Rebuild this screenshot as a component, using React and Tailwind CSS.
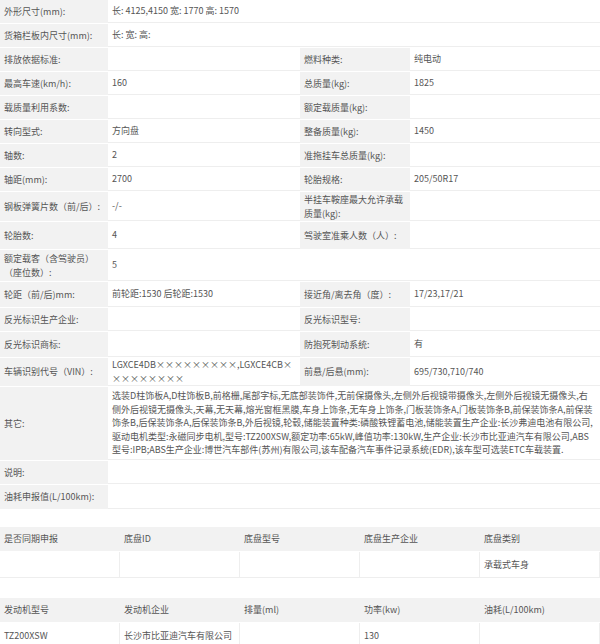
const L = "bg-[#f2f2f2] px-[4px] flex items-center";
const V = "bg-white px-[4px] flex items-center border-b border-[#eeeeee] break-all";

function Row({ h, cells }) {
  if (cells.length === 2) {
    return (
      <div className="flex border-b border-white" style={{ height: h }}>
        <div className={L + " w-[108px] shrink-0"}>{cells[0]}</div>
        <div className={V + " flex-1"}>{cells[1]}</div>
      </div>
    );
  }
  return (
    <div className="flex border-b border-white" style={{ height: h }}>
      <div className={L + " w-[108px] shrink-0"}>{cells[0]}</div>
      <div className={V + " w-[192px] shrink-0"}>{cells[1]}</div>
      <div className={L + " w-[110px] shrink-0"}>{cells[2]}</div>
      <div className={V + " flex-1"}>{cells[3]}</div>
    </div>
  );
}

const rows = [
  [24, ["外形尺寸(mm):", "长: 4125,4150 宽: 1770 高: 1570"]],
  [24, ["货箱栏板内尺寸(mm):", "长: 宽: 高:"]],
  [24, ["排放依据标准:", "", "燃料种类:", "纯电动"]],
  [24, ["最高车速(km/h):", "160", "总质量(kg):", "1825"]],
  [24, ["载质量利用系数:", "", "额定载质量(kg):", ""]],
  [24, ["转向型式:", "方向盘", "整备质量(kg):", "1450"]],
  [24, ["轴数:", "2", "准拖挂车总质量(kg):", ""]],
  [24, ["轴距(mm):", "2700", "轮胎规格:", "205/50R17"]],
  [30, ["钢板弹簧片数（前/后）:", "-/-", "半挂车鞍座最大允许承载质量(kg):", ""]],
  [28, ["轮胎数:", "4", "驾驶室准乘人数（人）:", ""]],
  [32, ["额定载客（含驾驶员）（座位数）:", "5"]],
  [26, ["轮距（前/后)mm:", "前轮距:1530 后轮距:1530", "接近角/离去角（度）:", "17/23,17/21"]],
  [24, ["反光标识生产企业:", "", "反光标识型号:", ""]],
  [26, ["反光标识商标:", "", "防抱死制动系统:", "有"]],
  [29, ["车辆识别代号（VIN）:", "LGXCE4DB×××××××××,LGXCE4CB×××××××××", "前悬/后悬(mm):", "695/730,710/740"]],
  [74, ["其它:", "选装D柱饰板A,D柱饰板B,前格栅,尾部字标,无底部装饰件,无前保摄像头,左侧外后视镜带摄像头,左侧外后视镜无摄像头,右侧外后视镜无摄像头,天幕,无天幕,熔光窗框黑膜,车身上饰条,无车身上饰条,门板装饰条A,门板装饰条B,前保装饰条A,前保装饰条B,后保装饰条A,后保装饰条B,外后视镜,轮毂,储能装置种类:磷酸铁锂蓄电池,储能装置生产企业:长沙弗迪电池有限公司,驱动电机类型:永磁同步电机,型号:TZ200XSW,额定功率:65kW,峰值功率:130kW,生产企业:长沙市比亚迪汽车有限公司,ABS型号:IPB;ABS生产企业:博世汽车部件(苏州)有限公司,该车配备汽车事件记录系统(EDR),该车型可选装ETC车载装置."]],
  [24, ["说明:", ""]],
  [25, ["油耗申报值(L/100km):", ""]],
];

function Table({ head, vals }) {
  return (
    <div>
      <div className="grid grid-cols-5 bg-[#f2f2f2] h-[25px] items-center border-b border-white">
        {head.map((h, i) => <div key={i} className="px-[4px]">{h}</div>)}
      </div>
      <div className="grid grid-cols-5 h-[26px]">
        {vals.map((v, i) => <div key={i} className="px-[4px] flex items-center border-r border-b border-[#eeeeee] bg-white whitespace-nowrap">{v}</div>)}
      </div>
    </div>
  );
}

export default function App() {
  return (
    <div className="w-[600px] h-[644px] overflow-hidden bg-white text-[#555] text-[9px] leading-[13.5px]" style={{ fontFamily: '"Noto Sans CJK SC", "Noto Sans", sans-serif' }}>
      {rows.map(([h, c], i) => <Row key={i} h={h} cells={c} />)}
      <div className="h-[17px]" />
      <Table head={["是否同期申报", "底盘ID", "底盘型号", "底盘生产企业", "底盘类别"]} vals={["", "", "", "", "承载式车身"]} />
      <div className="h-[20px]" />
      <Table head={["发动机型号", "发动机企业", "排量(ml)", "功率(kw)", "油耗(L/100km)"]} vals={["TZ200XSW", "长沙市比亚迪汽车有限公司", "", "130", ""]} />
    </div>
  );
}
